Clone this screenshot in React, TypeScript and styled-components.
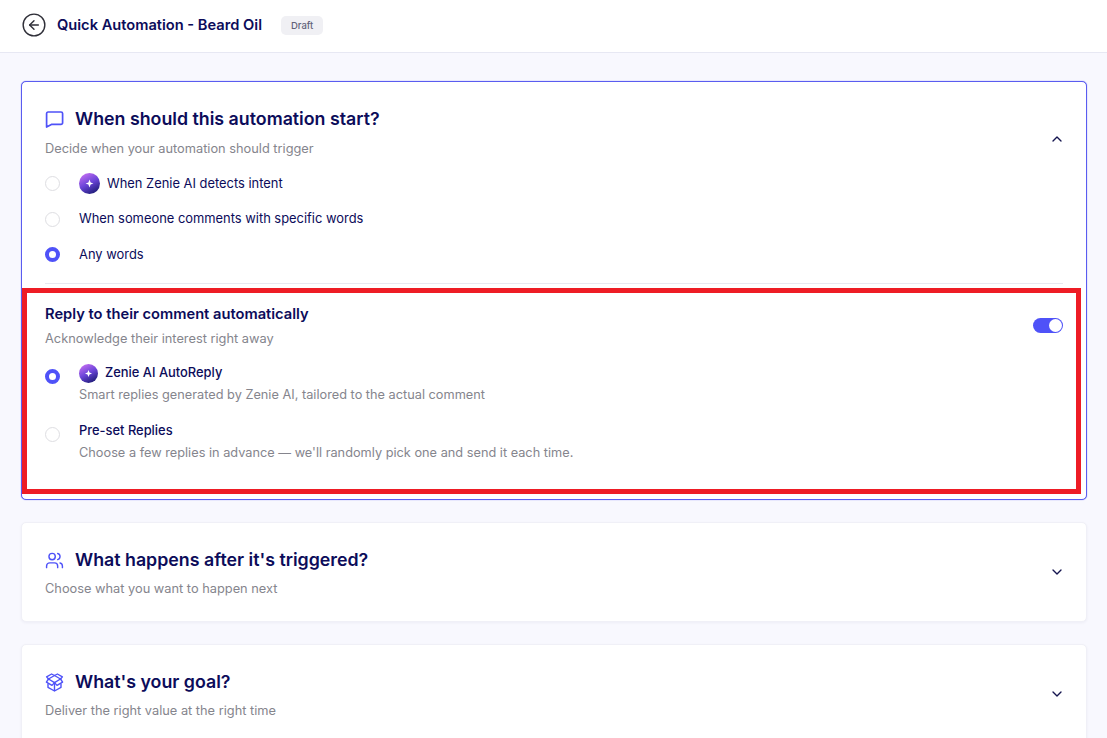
import styled, { createGlobalStyle } from 'styled-components'
import { ChevronDown, ChevronUp, CircleArrowLeft, Users } from 'lucide-react'
import type { ReactNode } from 'react'

const GlobalStyle = createGlobalStyle`
  * {
    box-sizing: border-box;
  }

  html,
  body {
    margin: 0;
    height: 738px;
    overflow: hidden;
    background-color: #f8f8fe;
    font-family: Inter, "Liberation Sans", sans-serif;
    color: #0c0c5a;
  }
`

const Header = styled.header`
  height: 53px;
  display: flex;
  align-items: center;
  padding: 0 21px 2px;
  background-color: #fff;
  border-bottom: 1px solid #e7e8f3;
`

const BackIcon = styled(CircleArrowLeft)`
  color: #2f2f38;
  margin-right: 10px;
  flex-shrink: 0;
`

const PageTitle = styled.h1`
  margin: 0;
  font-size: 14.65px;
  line-height: 20px;
  font-weight: 600;
`

const Badge = styled.span`
  margin-left: 19px;
  height: 19px;
  padding: 0 10px;
  display: flex;
  align-items: center;
  border-radius: 5px;
  background-color: #f0f0f4;
  color: #62627a;
  font-size: 9.5px;
  font-weight: 500;
`

const Content = styled.main`
  padding: 28px 20px 0 21px;
  display: flex;
  flex-direction: column;
  gap: 22px;
`

const Card = styled.section<{ $active?: boolean }>`
  position: relative;
  padding: 24px 23px 23px;
  background-color: #fff;
  border-radius: 5px;
  border: 1px solid ${({ $active }) => ($active ? '#5a5cf0' : '#f0f0f7')};
  box-shadow: ${({ $active }) => ($active ? '0 0 1px #5a5cf0' : '0 1px 3px rgba(30, 30, 90, 0.05)')};
`

const FirstCard = styled(Card)`
  padding-bottom: 37px;
`

const CardHeader = styled.div`
  display: flex;
  align-items: flex-start;
  justify-content: space-between;
`

const CardHeading = styled.div`
  display: flex;
  align-items: center;
  gap: 11px;
`

const HeadingIcon = styled.span`
  display: flex;
  color: #4f52f8;
`

const CardTitle = styled.h2`
  margin: 0;
  font-size: 17.8px;
  line-height: 26px;
  font-weight: 600;
`

const Chevron = styled.span<{ $top: number }>`
  display: flex;
  margin-right: -2px;
  margin-top: ${({ $top }) => $top}px;
  color: #15154f;
`

const Muted = styled.p<{ $top?: number }>`
  margin: ${({ $top }) => $top ?? 7}px 0 0;
  font-size: 12.8px;
  line-height: 18px;
  color: #85858d;
`

const Options = styled.div`
  margin-top: 15px;
  display: flex;
  flex-direction: column;
  gap: 14.5px;
`

const OptionRow = styled.div`
  display: flex;
  align-items: center;
  height: 21px;
`

const Radio = styled.span<{ $checked?: boolean }>`
  width: 15px;
  height: 15px;
  flex-shrink: 0;
  margin-right: 19px;
  border-radius: 50%;
  border: ${({ $checked }) => ($checked ? '4px solid #4f52f8' : '1px solid #dedee2')};
  background-color: #fff;
`

const ReplyRadio = styled(Radio)`
  margin-top: 5.5px;
`

const OptionLabel = styled.span`
  font-size: 12.9px;
  line-height: 18px;
  font-weight: 400;
`

const Divider = styled.hr`
  margin: 18px 0 0;
  border: 0;
  border-top: 1px solid #e8e8f0;
`

const SubSection = styled.div`
  margin-top: 20px;
  display: flex;
  align-items: flex-start;
  justify-content: space-between;
`

const SubTitle = styled.h3`
  margin: 0;
  font-size: 14.7px;
  line-height: 20px;
  font-weight: 600;
`

const Toggle = styled.span`
  margin-top: 14px;
  width: 30px;
  height: 15px;
  display: flex;
  justify-content: flex-end;
  align-items: center;
  padding: 0 1px;
  border-radius: 8px;
  background-color: #4f52f8;

  &::after {
    content: '';
    width: 13px;
    height: 13px;
    border-radius: 50%;
    background-color: #fff;
  }
`

const ReplyOptions = styled.div`
  margin-top: 15px;
  display: flex;
  flex-direction: column;
  gap: 17px;
`

const ReplyRow = styled.div`
  display: flex;
  align-items: flex-start;
`

const ReplyTitleRow = styled.div`
  display: flex;
  align-items: center;
  gap: 7px;
  height: 20px;
`

const ReplyTitle = styled.span`
  font-size: 12.9px;
  line-height: 18px;
  font-weight: 500;
`

const ReplyDescription = styled(Muted)`
  margin: 3px 0 0;
  font-size: 12.75px;
`

const MarkSvg = styled.svg<{ $gap: number }>`
  flex-shrink: 0;
  margin-right: ${({ $gap }) => $gap}px;
`

/* Red annotation box laid over the card in the screenshot */
const Highlight = styled.div`
  position: absolute;
  left: 0;
  right: 5px;
  top: 206px;
  bottom: 5px;
  border: 5px solid #ee1c25;
  pointer-events: none;
`

function ZenieMark({ size, gap, id }: { size: number; gap: number; id: string }) {
  return (
    <MarkSvg $gap={gap} width={size} height={size} viewBox="0 0 21 21" aria-hidden="true">
      <defs>
        <linearGradient id={id} x1="0.2" y1="0" x2="0.75" y2="1">
          <stop offset="0" stopColor="#c66ff2" />
          <stop offset="0.5" stopColor="#6a44d8" />
          <stop offset="1" stopColor="#1a1a72" />
        </linearGradient>
      </defs>
      <circle cx="10.5" cy="10.5" r="10.5" fill={`url(#${id})`} />
      <path d="M10.5 6.6 11.6 9.4 14.4 10.5 11.6 11.6 10.5 14.4 9.4 11.6 6.6 10.5 9.4 9.4Z" fill="#fff" />
    </MarkSvg>
  )
}

function CommentIcon() {
  return (
    <svg width="19" height="19" viewBox="0 0 19 19" fill="none" stroke="currentColor" strokeWidth="1.7" strokeLinejoin="round">
      <path d="M3 2h13a1.6 1.6 0 0 1 1.6 1.6v9.2a1.6 1.6 0 0 1-1.6 1.6H6.4L1.6 17V3.6A1.6 1.6 0 0 1 3 2Z" />
    </svg>
  )
}

function OpenBoxIcon() {
  return (
    <svg width="19" height="19" viewBox="0 0 19 19" fill="none" stroke="currentColor" strokeWidth="1.4" strokeLinejoin="round" strokeLinecap="round">
      <path d="M9.5 2.5 15.5 6 9.5 9.6 3.5 6Z" />
      <path d="M3.5 6 1.6 3.8 6.6 1 9.5 2.5 12.4 1 17.4 3.8 15.5 6" />
      <path d="M3.5 6 1.4 9.2 7 12.4 9.5 9.6 12 12.4 17.6 9.2 15.5 6" />
      <path d="M3 11v3.4L9.5 18 16 14.4V11M9.5 9.6V18" />
    </svg>
  )
}

function Collapsed({ icon, title, text }: { icon: ReactNode; title: string; text: string }) {
  return (
    <Card>
      <CardHeader>
        <div>
          <CardHeading>
            <HeadingIcon>{icon}</HeadingIcon>
            <CardTitle>{title}</CardTitle>
          </CardHeading>
          <Muted>{text}</Muted>
        </div>
        <Chevron $top={17}>
          <ChevronDown size={16} />
        </Chevron>
      </CardHeader>
    </Card>
  )
}

export default function App() {
  return (
    <>
      <GlobalStyle />
      <Header>
        <BackIcon size={26} strokeWidth={1.3} />
        <PageTitle>Quick Automation - Beard Oil</PageTitle>
        <Badge>Draft</Badge>
      </Header>
      <Content>
        <FirstCard $active>
          <CardHeader>
            <div>
              <CardHeading>
                <HeadingIcon>
                  <CommentIcon />
                </HeadingIcon>
                <CardTitle>When should this automation start?</CardTitle>
              </CardHeading>
              <Muted $top={8}>Decide when your automation should trigger</Muted>
            </div>
            <Chevron $top={25}>
              <ChevronUp size={16} />
            </Chevron>
          </CardHeader>
          <Options>
            <OptionRow>
              <Radio />
              <ZenieMark size={21} gap={7} id="zenie-intent" />
              <OptionLabel>When Zenie AI detects intent</OptionLabel>
            </OptionRow>
            <OptionRow>
              <Radio />
              <OptionLabel>When someone comments with specific words</OptionLabel>
            </OptionRow>
            <OptionRow>
              <Radio $checked />
              <OptionLabel>Any words</OptionLabel>
            </OptionRow>
          </Options>
          <Divider />
          <SubSection>
            <div>
              <SubTitle>Reply to their comment automatically</SubTitle>
              <Muted $top={6}>Acknowledge their interest right away</Muted>
            </div>
            <Toggle />
          </SubSection>
          <ReplyOptions>
            <ReplyRow>
              <ReplyRadio $checked />
              <div>
                <ReplyTitleRow>
                  <ZenieMark size={19} gap={0} id="zenie-reply" />
                  <ReplyTitle>Zenie AI AutoReply</ReplyTitle>
                </ReplyTitleRow>
                <ReplyDescription>Smart replies generated by Zenie AI, tailored to the actual comment</ReplyDescription>
              </div>
            </ReplyRow>
            <ReplyRow>
              <ReplyRadio />
              <div>
                <ReplyTitleRow>
                  <ReplyTitle>Pre-set Replies</ReplyTitle>
                </ReplyTitleRow>
                <ReplyDescription>Choose a few replies in advance — we'll randomly pick one and send it each time.</ReplyDescription>
              </div>
            </ReplyRow>
          </ReplyOptions>
          <Highlight />
        </FirstCard>
        <Collapsed
          icon={<Users size={19} strokeWidth={1.8} />}
          title="What happens after it's triggered?"
          text="Choose what you want to happen next"
        />
        <Collapsed
          icon={<OpenBoxIcon />}
          title="What's your goal?"
          text="Deliver the right value at the right time"
        />
      </Content>
    </>
  )
}
